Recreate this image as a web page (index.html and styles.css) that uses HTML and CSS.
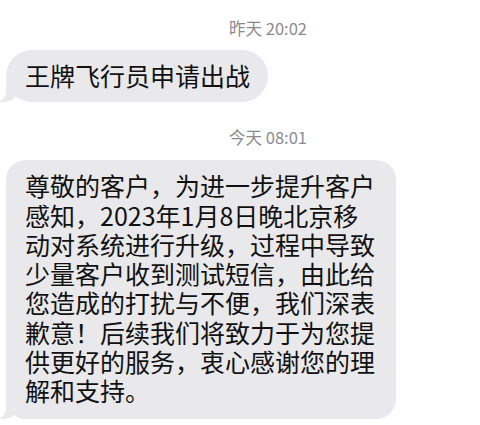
FILE: index.html
```html
<!DOCTYPE html>
<html lang="zh-CN">
<head>
    <meta charset="UTF-8">
    <meta name="viewport" content="width=device-width, initial-scale=1.0">
    <title>短信</title>
    <link rel="stylesheet" href="styles.css">
</head>
<body>
    <div class="thread">
        <div class="time time-first">昨天 20:02</div>
        <div class="row">
            <div class="bubble bubble-short">王牌飞行员申请出战</div>
        </div>

        <div class="time time-second">今天 08:01</div>
        <div class="row">
            <div class="bubble bubble-long">尊敬的客户，为进一步提升客户<br>感知，2023年1月8日晚北京移<br>动对系统进行升级，过程中导致<br>少量客户收到测试短信，由此给<br>您造成的打扰与不便，我们深表<br>歉意！后续我们将致力于为您提<br>供更好的服务，衷心感谢您的理<br>解和支持。</div>
        </div>
    </div>
</body>
</html>
```

FILE: styles.css
```css
/* Page */
body {
    margin: 0;
    background: #ffffff;
    font-family: "Noto Sans CJK SC", "Noto Sans", sans-serif;
    color: #111111;
}

.thread {
    display: flex;
    flex-direction: column;
}

/* Timestamps */
.time {
    text-align: center;
    padding-left: 56px;
    font-size: 16.5px;
    line-height: 20px;
    color: #8b8b8f;
}

.time-first {
    margin-top: 18px;
}

.time-second {
    margin-top: 25px;
}

/* Message bubbles */
.row {
    display: flex;
    padding-left: 6px;
}

.bubble {
    position: relative;
    background: #e9e9eb;
    font-size: 25px;
    line-height: 29.3px;
    white-space: nowrap;
}

.bubble-short {
    margin-top: 12px;
    padding: 11px 18px 12px 19px;
    border-radius: 26px;
}

.bubble-long {
    margin-top: 13px;
    padding: 11px 21px 13px 19px;
    border-radius: 20px;
}

/* Tail at the bottom left */
.bubble::before {
    content: "";
    position: absolute;
    left: -7px;
    bottom: 0;
    width: 20px;
    height: 20px;
    background: #e9e9eb;
    border-bottom-right-radius: 15px;
}

.bubble::after {
    content: "";
    position: absolute;
    left: -10px;
    bottom: 0;
    width: 10px;
    height: 20px;
    background: #ffffff;
    border-bottom-right-radius: 10px;
}
```
